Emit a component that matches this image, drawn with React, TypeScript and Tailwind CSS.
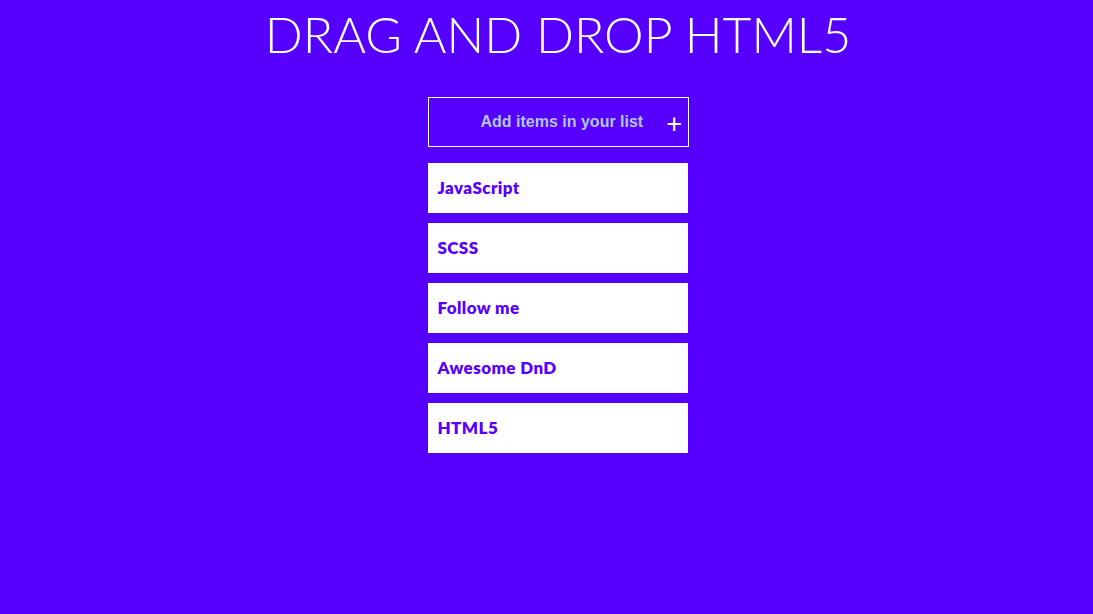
import React from "react";

const items = ["JavaScript", "SCSS", "Follow me", "Awesome DnD", "HTML5"];

export default function App() {
  return (
    <div className="w-[1093px] h-[614px] bg-[#5600ff] flex flex-col items-center overflow-hidden pl-[23px]">
      <h1
        className="mt-[5px] text-white text-[50px] leading-[59px] font-light tracking-[0px]"
        style={{ fontFamily: "Lato, 'Noto Sans', sans-serif" }}
      >
        DRAG AND DROP HTML5
      </h1>
      <div className="mt-[33px] w-[261px] flex flex-col gap-[16px]">
        <div className="h-[50px] border border-white flex items-center pl-[52px]">
          <span
            className="text-[16px] font-bold text-[#b3c4e6]"
            style={{ fontFamily: "'Liberation Sans', Arial, sans-serif" }}
          >
            Add items in your list
          </span>
          <span
            className="ml-[23px] mt-[4px] text-white text-[27px] leading-none"
            style={{ fontFamily: "'Liberation Sans', Arial, sans-serif" }}
          >
            +
          </span>
        </div>
        <div className="flex flex-col gap-[10px]">
          {items.map((t) => (
            <div
              key={t}
              className="w-[260px] h-[50px] bg-white flex items-center px-[10px] text-[17px] tracking-[0.4px] font-extrabold text-[#5600ff]"
              style={{ fontFamily: "Lato, 'Noto Sans', sans-serif" }}
            >
              {t}
            </div>
          ))}
        </div>
      </div>
    </div>
  );
}
